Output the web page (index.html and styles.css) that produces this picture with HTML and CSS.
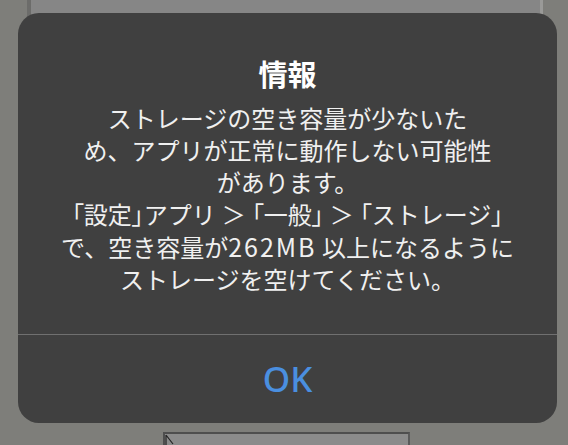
FILE: index.html
```html
<!DOCTYPE html>
<html lang="ja">
<head>
<meta charset="utf-8">
<link rel="stylesheet" href="styles.css">
</head>
<body>
<div class="page">
  <div class="back-panel"></div>
  <div class="spacer"></div>
  <div class="bottom-panel">
    <svg class="cursor" width="10" height="13" viewBox="0 0 10 13"><path d="M1 1 L1 12 M1 1 L8 10" stroke="#222" stroke-width="1.2" fill="none"/></svg>
  </div>
</div>
<div class="dialog">
  <div class="content">
    <div class="title">情報</div>
    <div class="message">ストレージの空き容量が少ないた<br>め、アプリが正常に動作しない可能性<br>があります。<br><span class="br">「</span>設定<span class="br">」</span>アプリ<span class="gt">＞</span><span class="br">「</span>一般<span class="br">」</span><span class="gt">＞</span><span class="br">「</span>ストレージ<span class="br">」</span><br>で、空き容量が<span class="num">262MB</span> 以上になるように<br>ストレージを空けてください。</div>
  </div>
  <div class="actions">
    <div class="ok">OK</div>
  </div>
</div>
</body>
</html>
```

FILE: styles.css
```css
html, body {
  margin: 0;
  padding: 0;
}
body {
  width: 568px;
  height: 445px;
  overflow: hidden;
  background: #7e7e7a;
  position: relative;
  font-family: "Noto Sans CJK JP", "Noto Sans", sans-serif;
}
.page {
  height: 445px;
  display: flex;
  flex-direction: column;
}
.back-panel {
  height: 40px;
  margin-left: 27px;
  width: 516px;
  background: #868686;
  border-left: 4px solid #6c6c6a;
  border-right: 3px solid #9a9a98;
  box-sizing: border-box;
}
.spacer {
  flex: 1;
}
.bottom-panel {
  height: 13px;
  margin-left: 163px;
  width: 247px;
  background: #8b8b8b;
  border-top: 2px solid #4e4e4e;
  border-left: 2px solid #4e4e4e;
  border-right: 2px solid #5a5a5a;
  box-sizing: border-box;
  position: relative;
}
.cursor {
  position: absolute;
  left: 0;
  top: 0;
}
.dialog {
  position: absolute;
  left: 18px;
  top: 13px;
  width: 539px;
  height: 410px;
  background: #404040;
  border-radius: 21px;
  display: flex;
  flex-direction: column;
  color: #f0f0f0;
}
.content {
  height: 322px;
  box-sizing: border-box;
  padding-top: 40px;
  border-bottom: 1px solid #707070;
  text-align: center;
}
.title {
  font-size: 29px;
  font-weight: 700;
  line-height: 40px;
  color: #ffffff;
  margin-bottom: 9px;
}
.message {
  font-size: 24px;
  line-height: 32px;
  white-space: nowrap;
}
.br {
  font-feature-settings: "palt";
}
.gt {
  margin: 0 6px;
}
.num {
  font-size: 25px;
  letter-spacing: 2px;
}
.actions {
  flex: 1;
  display: flex;
  align-items: center;
  justify-content: center;
}
.ok {
  font-family: "Noto Sans", sans-serif;
  font-size: 35px;
  font-weight: 500;
  color: #4a8fe0;
  line-height: 40px;
}
```
